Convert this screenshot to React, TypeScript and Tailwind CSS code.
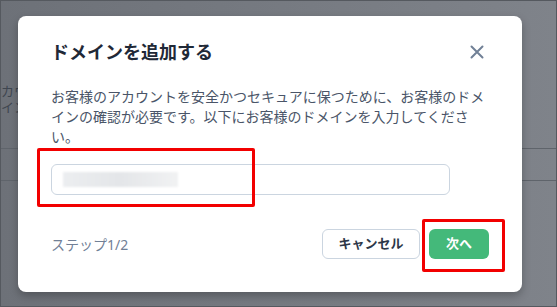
import React from 'react';

const font = { fontFamily: '"Noto Sans", "Noto Sans CJK JP", sans-serif' };

const CloseIcon: React.FC = () => (
  <svg width="14" height="14" viewBox="0 0 14 14" fill="none" stroke="#718096" strokeWidth="2" strokeLinecap="round">
    <path d="M1.5 1.5 L12.5 12.5 M12.5 1.5 L1.5 12.5" />
  </svg>
);

export default function App() {
  return (
    <div className="relative h-[307px] w-[557px] overflow-hidden border border-[#55595f] bg-gradient-to-r from-[#6d7178] to-[#7f838a]" style={font}>
      {/* page behind the overlay */}
      <div className="pt-[82px] text-[13px] leading-[16px] text-[#3f4650]">
        <div>カウ</div>
        <div>イン</div>
      </div>
      <div className="mt-[33px] h-[33px] border-y border-[#5f646b]" />

      {/* dialog */}
      <div className="absolute left-[17px] top-[15px] w-[504px] rounded-[8px] bg-white px-[33px] pb-[33px] pt-[22px] shadow-[0_4px_8px_rgba(0,0,0,0.25)]">
        <div className="flex h-[28px] items-center justify-between">
          <h2 className="text-[18px] font-semibold text-[#1f2937]">ドメインを追加する</h2>
          <div className="mr-[5px]"><CloseIcon /></div>
        </div>
        <p className="mt-[21px] text-[14px] leading-[20px] text-[#4a5568]">
          お客様のアカウントを安全かつセキュアに保つために、お客様のドメインの確認が必要です。以下にお客様のドメインを入力してください。
        </p>
        <div className="mt-[17px] flex h-[31px] w-[399px] items-center rounded-[6px] border border-[#cbd5e0] px-[11px]">
          <div className="h-[15px] w-[115px] bg-gradient-to-r from-[#eceef0] via-[#e4e6e9] to-[#f1f2f3] blur-[1px]" />
        </div>
        <div className="mt-[34px] flex items-center">
          <span className="text-[14px] text-[#718096]">ステップ1/2</span>
          <div className="ml-auto flex gap-[9px]">
            <button className="h-[30px] w-[98px] rounded-[6px] border border-[#cbd5e0] bg-white text-[13px] font-bold text-[#2d3748]">キャンセル</button>
            <button className="h-[30px] w-[60px] rounded-[6px] bg-[#44b97a] text-[13px] font-bold text-white">次へ</button>
          </div>
        </div>
      </div>

      {/* annotation boxes */}
      <div className="absolute left-[36px] top-[147px] h-[59px] w-[218px] rounded-[2px] border-[3px] border-[#f20000]" />
      <div className="absolute left-[421px] top-[218px] h-[53px] w-[83px] rounded-[2px] border-[3px] border-[#f20000]" />
    </div>
  );
}
